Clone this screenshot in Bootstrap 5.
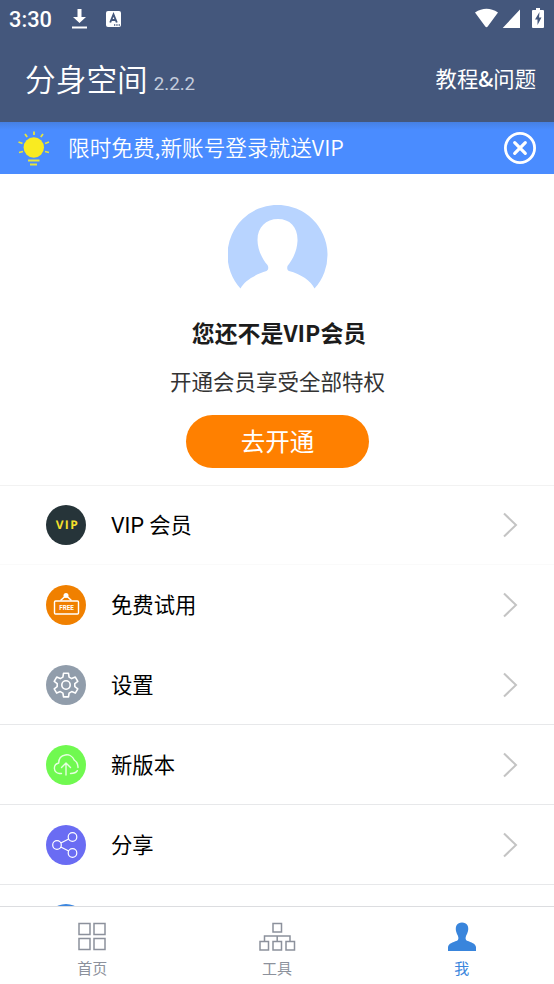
<!DOCTYPE html>
<html lang="zh-CN">
<head>
<meta charset="utf-8">
<meta name="viewport" content="width=device-width, initial-scale=1">
<title>分身空间</title>
<link href="https://cdn.jsdelivr.net/npm/bootstrap@5.3.0/dist/css/bootstrap.min.css" rel="stylesheet">
<style>
body{font-family:Roboto,"Noto Sans CJK SC",sans-serif;font-size:21.33px;line-height:32px;color:#000;background:#fff}
svg{display:block;flex:none}
.screen{height:984px}
.top-area{background:#44577c;color:#fff;height:122px}
.status{height:37px;padding:0 8px 0 9px}
.clock{font-weight:500;font-size:21.8px;width:61px;padding-top:2px}
.title-bar{height:85px;padding:2px 18px 0 25px}
.app-name{font-size:30.7px;line-height:40px;font-weight:350;margin-right:6px}
.version{font-size:18.67px;line-height:24px;color:#c5cddc;margin-top:6px}
.help{font-family:"Noto Sans CJK SC",sans-serif;margin-top:-5px}
.help b{font-weight:500}
.notice{height:52px;background:linear-gradient(#4680e2,#4a8cff 8px);color:#fff;padding:0 17px 0 16px}
.notice-text{margin-left:17px;margin-top:-2px;font-size:21.65px;font-family:"Noto Sans CJK SC",sans-serif;font-weight:350}
.notice svg{margin-top:-1px}
.profile{height:312px;border-bottom:1px solid #f2f2f2;padding:31px 0 0 1px}
.headline{font:700 22.9px/34px "Noto Sans CJK SC",sans-serif;color:#1c1c1c;margin-top:10px;margin-left:3px}
.subline{color:#333;font-size:21.5px;margin-top:18px}
.btn-open{--bs-btn-bg:#ff8000;--bs-btn-color:#fff;--bs-btn-hover-bg:#ee7700;--bs-btn-hover-color:#fff;width:183px;height:53px;font-size:24.5px;line-height:36px;margin-top:16px;padding:10px 0 7px;border:0}
.entries{height:420px;overflow:hidden}
.entry{height:80px;flex:none;padding:0 36px 0 46px;border-bottom:1px solid #e7e8ea}
.entry.first{height:79px}
.entry.faint{border-color:#fafafa}.entry.clear{border-color:#fff}
.entry-label{margin-left:25px;padding-top:2px}
.entry.partly{padding-bottom:2px}
.tabs{height:78px;border-top:1px solid #dcdde0;color:#8c919c;padding-top:14px}
.tab{font-size:15px;line-height:22px;width:184.67px;color:inherit;text-decoration:none}
.tab span{margin-top:7px}
.tab.active{color:#3985dc}
</style>
<script src="https://cdn.jsdelivr.net/npm/bootstrap@5.3.0/dist/js/bootstrap.bundle.min.js"></script>
</head>
<body>
<div class="screen d-flex flex-column overflow-hidden">
<header class="top-area">
  <div class="status d-flex align-items-center">
    <span class="clock">3:30</span>
    <svg width="20" height="22" viewBox="0 0 20 22"><path d="M7.500 1h4v8H16l-6.500 6L3 9h4.500zM2 18.500h15v2H2z" fill="#fff"/></svg>
    <svg class="ms-3" width="16" height="18" viewBox="0 0 16 18"><rect y="1" width="15" height="16" rx="2" fill="#fff"/><path d="M4.200 12.500 7.500 4.500l3.300 8M5.300 10h4.400" fill="none" stroke="#44577c" stroke-width="1.900"/><path d="M8 15h1.300m1 0h1.300m1 0h1.300" stroke="#44577c" stroke-width="1.300"/></svg>
    <svg class="ms-auto" width="72" height="22" viewBox="474 8 72 22"><g fill="#fff"><path d="M475 12.500Q486.500 5 498 12.500L487.700 26.500q-1.200 1.400-2.400 0zM520 9.500V28h-17.300z"/><path d="M536 8h4v2h3q1 0 1 1v16q0 1-1 1h-10q-1 0-1-1V11q0-1 1-1h3z"/></g><path d="m539.500 12-4.500 7.500h2.500V25l4-7.500H539z" fill="#44577c"/></svg>
  </div>
  <div class="title-bar d-flex align-items-center">
    <span class="app-name">分身空间</span><span class="version">2.2.2</span>
    <span class="help ms-auto">教程<b>&amp;</b>问题</span>
  </div>
</header>
<div class="notice d-flex align-items-center">
  <svg width="35" height="38" viewBox="0 0 35 38"><circle cx="17.800" cy="18.500" r="10.200" fill="#f9eb21"/><path d="M18 2.500v3.500M9 5l2.200 3M27 5l-2.200 3M2.500 13l4 1.500M33 13l-4 1.500M3 23.500l4-1M29 22.500l4 1M12 31.500h11.500M14 35.500h7" fill="none" stroke="#e8e43b" stroke-width="1.800"/></svg>
  <span class="notice-text">限时免费,新账号登录就送VIP</span>
  <svg class="ms-auto" width="34" height="34" viewBox="0 0 34 34" fill="none" stroke="#fff"><circle cx="17" cy="17" r="14.600" stroke-width="2.800"/><path d="m11.700 11.700 10.600 10.600m0-10.600L11.700 22.300" stroke-width="3.200" stroke-linecap="round"/></svg>
</div>
<section class="profile d-flex flex-column align-items-center">
  <svg width="100" height="100" viewBox="0 0 100 100"><path d="M12.500 83.500A50 50 0 1 1 86.500 83.500C83 76 73 69 61 66c-2-1-2-3-1.500-5C65 54 69 46 69.500 36 70 22 62 14 50 14s-20.500 8-20.500 21C29.500 44 34 54 39.500 60q2 4-1 6C28 69 16 76 12.500 83.500z" fill="#b8d4ff"/></svg>
  <div class="headline">您还不是VIP会员</div>
  <div class="subline">开通会员享受全部特权</div>
  <button class="btn btn-open rounded-pill" type="button">去开通</button>
</section>
<main class="entries d-flex flex-column">
  <div class="entry first faint d-flex align-items-center">
    <svg width="40" height="40" viewBox="0 0 40 40"><circle cx="20" cy="20" r="20" fill="#263439"/><text x="9.700" y="24" textLength="22" font-family="Open Sans" font-weight="700" font-size="12" fill="#f4df2c" text-rendering="geometricPrecision">VIP</text></svg>
    <span class="entry-label">VIP 会员</span><svg class="ms-auto chevron" width="15" height="26" viewBox="0 0 15 26"><path d="m1 1.500 12 11.500L1 24.500" fill="none" stroke="#c4c4c4" stroke-width="2"/></svg>
  </div>
  <div class="entry clear d-flex align-items-center">
    <svg width="40" height="40" viewBox="0 0 40 40"><circle cx="20" cy="20" r="20" fill="#f08000"/><g fill="none" stroke="#fff" stroke-width="1.400"><rect x="8.500" y="16" width="24" height="13" rx="1"/><path d="m14.500 15.500 5.500-5 5.500 5"/></g><circle cx="20" cy="10.500" r="2.500" fill="#fff"/><text x="20.500" y="24.900" text-anchor="middle" font-family="Roboto" font-weight="700" font-size="6.300" fill="#fff">FREE</text></svg>
    <span class="entry-label">免费试用</span><svg class="ms-auto chevron" width="15" height="26" viewBox="0 0 15 26"><path d="m1 1.500 12 11.500L1 24.500" fill="none" stroke="#c4c4c4" stroke-width="2"/></svg>
  </div>
  <div class="entry d-flex align-items-center">
    <svg width="40" height="40" viewBox="0 0 40 40"><circle cx="20" cy="20" r="20" fill="#919dab"/><g fill="none" stroke="#fff" stroke-width="1.600" stroke-linejoin="round"><path d="M17.500 8.300h5l.6 3.800 2.600 1.500 3.600-1.500 2.500 4.300-3 2.200v3l3 2.200-2.500 4.300-3.600-1.500-2.600 1.500-.6 3.800h-5l-.6-3.800-2.600-1.500-3.600 1.500-2.500-4.300 3-2.200v-3l-3-2.200 2.500-4.300 3.600 1.500 2.600-1.500z"/><circle cx="20" cy="20" r="4.200"/></g></svg>
    <span class="entry-label">设置</span><svg class="ms-auto chevron" width="15" height="26" viewBox="0 0 15 26"><path d="m1 1.500 12 11.500L1 24.500" fill="none" stroke="#c4c4c4" stroke-width="2"/></svg>
  </div>
  <div class="entry d-flex align-items-center">
    <svg width="40" height="40" viewBox="0 0 40 40"><circle cx="20" cy="20" r="20" fill="#70f950"/><g fill="none" stroke="#e6ffe0" stroke-width="1.400" stroke-linecap="round" stroke-linejoin="round"><path d="M15.500 28.500h-2c-6.500-1-6.800-9-.8-10.500 0-9.500 12.500-11 15.500-3 2.500 1.800 4 4.500 3.800 7.500M24.500 28.500c3 0 5.500-.4 6.800-2.800M20 30V18.500M15.500 22.500l4.500-4.500 4.500 4.500"/></g></svg>
    <span class="entry-label">新版本</span><svg class="ms-auto chevron" width="15" height="26" viewBox="0 0 15 26"><path d="m1 1.500 12 11.500L1 24.500" fill="none" stroke="#c4c4c4" stroke-width="2"/></svg>
  </div>
  <div class="entry d-flex align-items-center">
    <svg width="40" height="40" viewBox="0 0 40 40"><circle cx="20" cy="20" r="20" fill="#6a6cf3"/><g fill="none" stroke="#fff" stroke-width="1.200"><circle cx="11" cy="20" r="4.300"/><circle cx="26.500" cy="12" r="4.300"/><circle cx="26.500" cy="28" r="4.300"/><path d="m14.800 18 7.900-4M14.800 22l7.900 4"/></g></svg>
    <span class="entry-label">分享</span><svg class="ms-auto chevron" width="15" height="26" viewBox="0 0 15 26"><path d="m1 1.500 12 11.500L1 24.500" fill="none" stroke="#c4c4c4" stroke-width="2"/></svg>
  </div>
  <div class="entry partly d-flex align-items-center">
    <svg width="40" height="40" viewBox="0 0 40 40"><circle cx="20" cy="20" r="20" fill="#3d87df"/></svg>
  </div>
</main>
<nav class="tabs d-flex">
  <a href="#" class="tab d-flex flex-column align-items-center">
    <svg width="30" height="30" viewBox="0 0 30 30" fill="none" stroke="currentColor" stroke-width="1.500"><path d="M2 2.500h11v11H2zM17 2.500h11v11H17zM2 17.500h11v11H2zM17 17.500h11v11H17z"/></svg><span>首页</span></a>
  <a href="#" class="tab d-flex flex-column align-items-center">
    <svg width="38" height="30" viewBox="0 0 38 30" fill="none" stroke="currentColor" stroke-width="1.500"><path d="M15 2.500h8.500v8.500H15zM2 20.500h8.500v8.500H2zM15 20.500h8.500v8.500H15zM28 20.500h8.500v8.500H28zM6.500 20.500v-5.500h25.500v5.500M19.200 15v5.500"/></svg><span>工具</span></a>
  <a href="#" class="tab active d-flex flex-column align-items-center">
    <svg width="30" height="30" viewBox="0 0 30 30"><path d="M15 1.500c5 0 7 4 6 8.500-.5 2-1 3-1.800 4.500-1 2.500-.8 4.500.8 5.300 4.500 1.600 8.300 2.700 9 6.200v4H1v-4c.7-3.500 4.500-4.600 9-6.200 1.600-.8 1.800-2.800.8-5.300C10 13 9.500 12 9 10c-1-4.500 1-8.500 6-8.500z" fill="currentColor"/></svg><span>我</span></a>
</nav>
</div>
</body>
</html>
